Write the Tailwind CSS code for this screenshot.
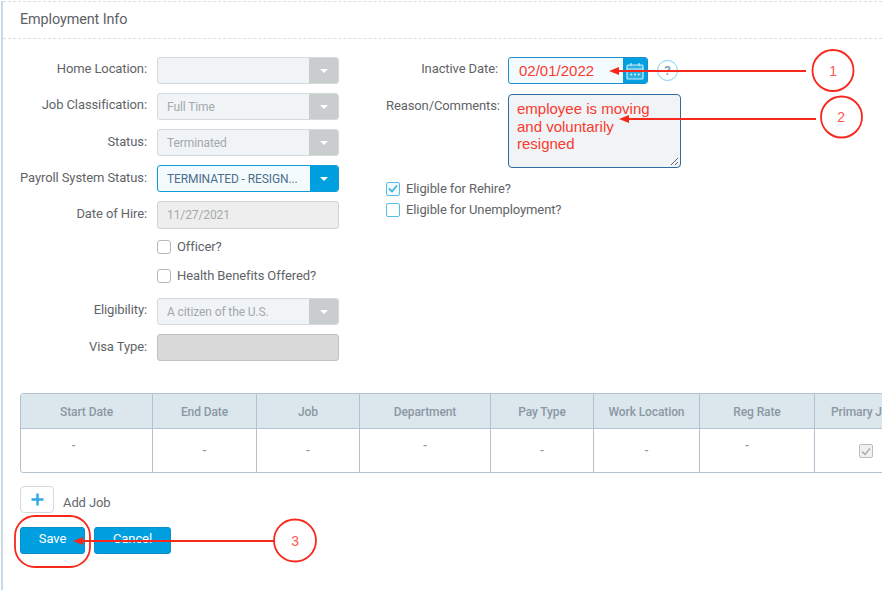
<!DOCTYPE html>
<html lang="en">
<head>
  <meta charset="UTF-8" />
  <title>Employment Info</title>
  <script src="https://cdn.jsdelivr.net/npm/@tailwindcss/browser@4"></script>
</head>
<body class="bg-white font-['Roboto',sans-serif] text-[13px] tracking-[-0.1px] text-[#5f6468]">
  <div class="relative w-[882px] h-[590px] overflow-hidden">
    <div class="ml-px h-[590px] border-l-2 border-[#c9d9e6] pl-[17px]">
      <div class="-ml-[17px] h-[38px] border-y border-dashed border-[#dcdfe2] mt-px pl-[17px] pt-[8px] text-[14.4px] leading-[20px] text-[#5d6165]">Employment Info</div>

      <div class="flex mt-[18px]">
        <!-- left column -->
        <div class="w-[320px] flex flex-col">
          <div class="flex h-[27px] mb-[9px]">
            <label class="w-[127px] text-right leading-[24px]">Home Location:</label>
            <div class="ml-[10px] w-[182px] h-[27px] flex rounded-[3px] border border-[#d5d9dc] bg-[#f0f4f7] overflow-hidden">
              <span class="flex-1"></span>
              <span class="w-[29px] bg-[#c9cdce] flex items-center justify-center"><i class="border-x-[4px] border-t-[4px] border-x-transparent border-t-white"></i></span>
            </div>
          </div>
          <div class="flex h-[27px] mb-[9px]">
            <label class="w-[127px] text-right leading-[24px]">Job Classification:</label>
            <div class="ml-[10px] w-[182px] h-[27px] flex rounded-[3px] border border-[#d5d9dc] bg-[#f0f4f7] overflow-hidden">
              <span class="flex-1 pl-[9px] text-[12px] leading-[27px] text-[#a3a8ac]">Full Time</span>
              <span class="w-[29px] bg-[#c9cdce] flex items-center justify-center"><i class="border-x-[4px] border-t-[4px] border-x-transparent border-t-white"></i></span>
            </div>
          </div>
          <div class="flex h-[27px] mb-[9px]">
            <label class="w-[127px] text-right leading-[26px]">Status:</label>
            <div class="ml-[10px] w-[182px] h-[27px] flex rounded-[3px] border border-[#d5d9dc] bg-[#f0f4f7] overflow-hidden">
              <span class="flex-1 pl-[9px] text-[12px] leading-[27px] text-[#a3a8ac]">Terminated</span>
              <span class="w-[29px] bg-[#c9cdce] flex items-center justify-center"><i class="border-x-[4px] border-t-[4px] border-x-transparent border-t-white"></i></span>
            </div>
          </div>
          <div class="flex h-[27px] mb-[9px]">
            <label class="w-[127px] text-right leading-[26px]">Payroll System Status:</label>
            <div class="ml-[10px] w-[182px] h-[27px] flex rounded-[3px] border border-[#0f9bd8] bg-[#f4fbfe] overflow-hidden">
              <span class="flex-1 pl-[9px] text-[12px] leading-[27px] text-[#4d6d8a]">TERMINATED - RESIGN...</span>
              <span class="w-[28px] bg-[#009fe0] flex items-center justify-center"><i class="border-x-[4px] border-t-[4px] border-x-transparent border-t-white"></i></span>
            </div>
          </div>
          <div class="flex h-[28px] mb-[10px]">
            <label class="w-[127px] text-right leading-[26px]">Date of Hire:</label>
            <div class="ml-[10px] w-[182px] h-[28px] rounded-[3px] border border-[#d0d3d5] bg-[#eeeeee] pl-[9px] text-[12px] leading-[27px] text-[#a6a9ab]">11/27/2021</div>
          </div>
          <div class="flex items-center h-[15px] ml-[137px] mb-[14px]">
            <span class="w-[14px] h-[14px] rounded-[3px] border border-[#b5b8ba] bg-white"></span>
            <span class="ml-[6px]">Officer?</span>
          </div>
          <div class="flex items-center h-[15px] ml-[137px] mb-[15px]">
            <span class="w-[14px] h-[14px] rounded-[3px] border border-[#b5b8ba] bg-white"></span>
            <span class="ml-[6px]">Health Benefits Offered?</span>
          </div>
          <div class="flex h-[27px] mb-[9px]">
            <label class="w-[127px] text-right leading-[24px]">Eligibility:</label>
            <div class="ml-[10px] w-[182px] h-[27px] flex rounded-[3px] border border-[#d5d9dc] bg-[#f0f4f7] overflow-hidden">
              <span class="flex-1 pl-[9px] text-[12px] leading-[27px] text-[#a3a8ac]">A citizen of the U.S.</span>
              <span class="w-[29px] bg-[#c9cdce] flex items-center justify-center"><i class="border-x-[4px] border-t-[4px] border-x-transparent border-t-white"></i></span>
            </div>
          </div>
          <div class="flex h-[27px]">
            <label class="w-[127px] text-right leading-[25px]">Visa Type:</label>
            <div class="ml-[10px] w-[182px] h-[27px] rounded-[3px] border border-[#bfc2c4] bg-[#d9d9d9]"></div>
          </div>
        </div>

        <!-- right column -->
        <div class="ml-[46px] w-[420px] flex flex-col">
          <div class="flex h-[27px] mb-[10px]">
            <label class="w-[112px] text-right leading-[24px]">Inactive Date:</label>
            <div class="ml-[10px] w-[140px] h-[27px] flex rounded-[3px] border border-[#1b8fc9] bg-[#f4fbfe] overflow-hidden">
              <span class="flex-1 pl-[10px] leading-[26px] font-['Liberation_Sans',sans-serif] text-[15px] tracking-normal text-[#fb3a2e]">02/01/2022</span>
              <span class="w-[24px] bg-[#009fe0] flex items-center justify-center">
                <svg width="18" height="18" viewBox="0 0 18 18" fill="none" stroke="#cdeefb" stroke-width="1.2">
                  <rect x="1" y="3" width="16" height="14" rx="1" fill="#ffffff" fill-opacity="0.18" />
                  <path d="M1 7h16M5 1v3M13 1v3" />
                  <path d="M4.500 12.500h1.600M8.200 12.500h1.600M11.900 12.500h1.600" stroke="#fff" stroke-width="1.6" />
                </svg>
              </span>
            </div>
            <span class="ml-[9px] mt-[3px] w-[21px] h-[21px] rounded-full border border-[#7fd0f2] text-center leading-[19px] text-[#7fa8bd] font-bold">?</span>
          </div>
          <div class="flex">
            <label class="w-[112px] text-right leading-[24px]">Reason/Comments:</label>
            <div class="relative ml-[10px] w-[173px] h-[74px] rounded-[4px] border border-[#2f6b9f] bg-[#f0f4f7] pl-[8px] pt-[5px] font-['Liberation_Sans',sans-serif] text-[15px] leading-[17.5px] tracking-normal text-[#fb3a2e]">
              employee is moving<br>and voluntarily<br>resigned
              <svg class="absolute right-[1px] bottom-[1px]" width="9" height="9" viewBox="0 0 9 9" stroke="#666" stroke-width="1"><path d="M1 8L8 1M5 8L8 5" /></svg>
            </div>
          </div>
          <div class="flex items-center h-[15px] mt-[13px]">
            <span class="w-[14px] h-[14px] rounded-[2px] border border-[#55bdea] bg-[#f4fbfe] flex items-center justify-center">
              <svg width="10" height="9" viewBox="0 0 10 9" fill="none" stroke="#3fb2e6" stroke-width="1.8"><path d="M1 4.5l3 3 5-6" /></svg>
            </span>
            <span class="ml-[6px]">Eligible for Rehire?</span>
          </div>
          <div class="flex items-center h-[15px] mt-[6px]">
            <span class="w-[14px] h-[14px] rounded-[2px] border border-[#55bdea] bg-white"></span>
            <span class="ml-[6px]">Eligible for Unemployment?</span>
          </div>
        </div>
      </div>

      <!-- jobs table -->
      <div class="mt-[32px] w-[900px] h-[80px] rounded-[3px] border border-[#b3c2ce] text-center text-[12px] font-medium">
        <div class="grid grid-cols-[132px_104px_103px_131px_103px_106px_115px_100px] h-[35px] bg-[#dbe6ed] border-b border-[#b3c2ce] leading-[36px] text-[#8b98a3]">
          <div class="border-r border-[#b3c2ce]">Start Date</div>
          <div class="border-r border-[#b3c2ce]">End Date</div>
          <div class="border-r border-[#b3c2ce]">Job</div>
          <div class="border-r border-[#b3c2ce]">Department</div>
          <div class="border-r border-[#b3c2ce]">Pay Type</div>
          <div class="border-r border-[#b3c2ce]">Work Location</div>
          <div class="border-r border-[#b3c2ce]">Reg Rate</div>
          <div class="text-left pl-[16px] whitespace-nowrap">Primary Job</div>
        </div>
        <div class="grid grid-cols-[132px_104px_103px_131px_103px_106px_115px_100px] h-[43px] text-[#8b98a3]">
          <div class="border-r border-[#b3c2ce] pt-[8px] pr-[26px] leading-[18px]">-</div>
          <div class="border-r border-[#b3c2ce] pt-[13px] leading-[18px]">-</div>
          <div class="border-r border-[#b3c2ce] pt-[13px] leading-[18px]">-</div>
          <div class="border-r border-[#b3c2ce] pt-[8px] leading-[18px]">-</div>
          <div class="border-r border-[#b3c2ce] pt-[13px] leading-[18px]">-</div>
          <div class="border-r border-[#b3c2ce] pt-[13px] leading-[18px]">-</div>
          <div class="border-r border-[#b3c2ce] pt-[8px] pr-[20px] leading-[18px]">-</div>
          <div class="pl-[44px] pt-[15px]">
            <span class="flex items-center justify-center w-[14px] h-[14px] rounded-[2px] border border-[#bdbdbd] bg-[#f0f0f0]">
              <svg width="10" height="9" viewBox="0 0 10 9" fill="none" stroke="#a8a8a8" stroke-width="1.4"><path d="M1 4.5l3 3 5-6" /></svg>
            </span>
          </div>
        </div>
      </div>

      <div class="flex items-center mt-[13px] h-[27px]">
        <span class="w-[34px] h-[27px] rounded-[4px] border border-[#d5d9dc] flex items-center justify-center">
          <svg width="13" height="13" viewBox="0 0 13 13" stroke="#2fa9e2" stroke-width="2.4"><path d="M6.500 0.500v12M0.500 6.500h12" /></svg>
        </span>
        <span class="ml-[9px] pt-[6px] text-[#63676a]">Add Job</span>
      </div>

      <div class="flex mt-[14px]">
        <button class="w-[65px] h-[27px] rounded-[3px] border border-[#0d8ecb] bg-[#009fe0] pb-[3px] text-white">Save</button>
        <button class="ml-[9px] w-[77px] h-[27px] rounded-[3px] border border-[#0d8ecb] bg-[#009fe0] pb-[3px] text-white">Cancel</button>
      </div>
    </div>

    <!-- red annotations -->
    <svg class="absolute left-0 top-0" width="882" height="590" viewBox="0 0 882 590" fill="none">
      <g stroke="#f9281d" stroke-width="1.8">
        <circle cx="833" cy="70.500" r="20.500" />
        <circle cx="841.500" cy="117" r="20.500" />
        <circle cx="295" cy="540.500" r="21" />
        <rect x="15" y="516" width="75" height="51" rx="20" />
        <path d="M806 71H618M816 119H628M274 541H82" />
      </g>
      <g fill="#f9281d">
        <path d="M609 71l10-4v8zM619 119l10-4v8zM73 541l10-4v8z" />
      </g>
      <g fill="#fb5a4f" font-family="Liberation Sans" font-size="14" text-anchor="middle">
        <text x="833" y="76">1</text>
        <text x="841" y="122">2</text>
        <text x="295" y="546">3</text>
      </g>
    </svg>
  </div>
</body>
</html>
